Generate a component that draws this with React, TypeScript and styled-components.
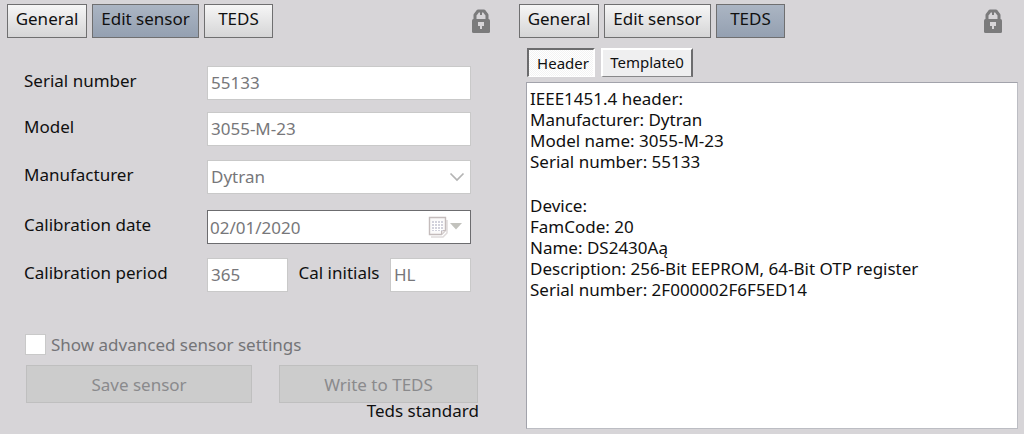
import React, { useState } from "react";
import styled, { createGlobalStyle, css } from "styled-components";

const GlobalStyle = createGlobalStyle`
  *, *::before, *::after { box-sizing: border-box; }
  body {
    margin: 0;
    background: #d7d5d8;
    color: #101010;
    font: 17px/21px "Noto Sans", "DejaVu Sans", sans-serif;
  }
  button, input, select { font: inherit; color: inherit; margin: 0; border-radius: 0; }
`;

const Page = styled.main`
  display: grid;
  grid-template-columns: 1fr 1fr;
  min-height: 100vh;
`;

const Panel = styled.section`
  display: flex;
  flex-direction: column;
  min-width: 0;
  padding: 4px 6px 5px 7px;
`;

const Toolbar = styled.header`
  display: flex;
  align-items: center;
  gap: 5px;
  padding-right: 15px;
`;

const ToolButton = styled.button<{ $active?: boolean; $width: number }>`
  width: ${(p) => p.$width}px;
  height: 34px;
  padding: 0 0 6px;
  white-space: nowrap;
  border: 1px solid #6f6f70;
  background: ${(p) =>
    p.$active
      ? "linear-gradient(#abb5c3, #94a0b1)"
      : "linear-gradient(#f6f6f6, #d5d5d6)"};
`;

const LockSvg = styled.svg`
  display: block;
  margin-left: auto;
`;

const Form = styled.form`
  display: flex;
  flex-direction: column;
  flex: 1;
  padding: 28px 35px 0 17px;
`;

const Row = styled.div<{ $gap?: number }>`
  display: grid;
  grid-template-columns: 183px minmax(0, 1fr);
  align-items: center;
  margin-bottom: ${(p) => p.$gap ?? 0}px;
`;

const Label = styled.label`
  padding-bottom: 6px;
  white-space: nowrap;
`;

const fieldBox = css`
  width: 100%;
  height: 34px;
  background: #fff;
  border: 1px solid #c9c9c9;
  color: #77777a;
  opacity: 1;
`;

const TextInput = styled.input`
  ${fieldBox}
  padding: 0 3px 2px;
`;

const Control = styled.div`
  display: grid;
  align-items: center;
  > * { grid-area: 1 / 1; }
`;

const Select = styled.select`
  ${fieldBox}
  padding: 0 3px 2px;
  appearance: none;
`;

const Chevron = styled.svg`
  justify-self: end;
  margin-right: 6px;
  pointer-events: none;
`;

const DateBox = styled.div`
  ${fieldBox}
  display: flex;
  align-items: center;
  border-color: #6c6c6f;
  padding-right: 8px;
`;

const DateInput = styled.input`
  flex: 1;
  min-width: 0;
  padding: 0 2px;
  border: 0;
  background: none;
`;

const IconButton = styled.button`
  display: block;
  padding: 0;
  border: 0;
  background: none;
  line-height: 0;
`;

const SplitRow = styled.div`
  display: grid;
  grid-template-columns: 81px 1fr 81px;
  align-items: center;
  justify-items: center;
`;

const CheckRow = styled.label`
  display: flex;
  align-items: center;
  gap: 5px;
  margin-top: 42px;
  padding-left: 1px;
  color: #747477;
`;

const Checkbox = styled.input`
  appearance: none;
  width: 21px;
  height: 21px;
  background: #fff;
  border: 1px solid #c9c9c9;
`;

const Actions = styled.div`
  display: grid;
  grid-template-columns: 226fr 199fr;
  gap: 27px;
  margin: 10px -7px 0 2px;
`;

const ActionButton = styled.button`
  height: 38px;
  padding: 0;
  border: 1px solid #bfbfbf;
  background: #cccccc;
  color: #8a8a8c;
`;

const Status = styled.p`
  margin: -3px -8px 0 0;
  text-align: right;
`;

const Tabs = styled.div`
  display: flex;
  gap: 6px;
  margin: 10px 0 5px 8px;
  font-size: 15px;
`;

const Tab = styled.button<{ $active?: boolean }>`
  width: ${(p) => (p.$active ? 68 : 92)}px;
  height: 29px;
  white-space: nowrap;
  border: 2px solid;
  ${(p) =>
    p.$active
      ? css`
          padding: 0 0 0 4px;
          border-color: #6c6c6e #fff #fff #6c6c6e;
          border-bottom-width: 1px;
          background: repeating-conic-gradient(#f3f3f3 0 25%, #fff 0 50%) 0 0 / 2px 2px;
        `
      : css`
          padding: 0 0 2px;
          border-color: #fff #6c6c6e #88888a #fff;
          border-bottom-width: 1px;
          background: #efeff0;
        `}
`;

const Report = styled.div`
  flex: 1;
  margin-left: 7px;
  padding: 5px 3px;
  background: #fff;
  border: 1px solid #bcbdc3;
  border-top-color: #a2a3ab;
  border-left-color: #a2a3ab;
`;

const ReportBlock = styled.p`
  margin: 0 0 23px;
`;

function LockIcon() {
  return (
    <LockSvg width="20" height="26" viewBox="0 0 20 26" role="img" aria-label="Locked">
      <path d="M4 12V7l3-4h6l3 4v5" fill="none" stroke="#7b7b7c" strokeWidth="3" strokeLinejoin="round" />
      <rect x="1" y="11" width="18" height="14" rx="1.5" fill="#7b7b7c" />
      <path d="M7 14h6v4h-2v3H9v-3H7z" fill="#d7d5d8" />
      <path d="M9 4h2v3H9z" fill="#7b7b7c" />
    </LockSvg>
  );
}

function CalendarIcon() {
  return (
    <svg width="34" height="22" viewBox="0 0 34 22" aria-hidden="true">
      <path d="M3 21h12l4-4V4" fill="none" stroke="#dedada" strokeWidth="1.5" />
      <path d="M1.5 1.5h16v13l-4 4h-12z" fill="#fbfafa" stroke="#c4bcbc" strokeWidth="1.4" />
      <path d="M17.500 14.500h-4v4" fill="#e8e4e4" stroke="#c4bcbc" />
      <rect x="4" y="5" width="11" height="10" fill="#d2d2dc" />
      <path d="M4 7.500h11M4 10.500h11M4 13.500h11M6.500 5v10M9.500 5v10M12.500 5v10" stroke="#fff" />
      <path d="M22 7h12l-6 6.500z" fill="#c2c2bd" />
    </svg>
  );
}

const toolItems = [
  { name: "General", width: 80 },
  { name: "Edit sensor", width: 107 },
  { name: "TEDS", width: 69 },
];

function SensorToolbar({ active }: { active: string }) {
  return (
    <Toolbar>
      {toolItems.map((item) => (
        <ToolButton
          key={item.name}
          type="button"
          $width={item.width}
          $active={item.name === active}
          aria-pressed={item.name === active}
        >
          {item.name}
        </ToolButton>
      ))}
      <LockIcon />
    </Toolbar>
  );
}

function EditSensor() {
  return (
    <Form>
      <Row $gap={12}>
        <Label htmlFor="serial">Serial number</Label>
        <TextInput id="serial" defaultValue="55133" disabled />
      </Row>
      <Row $gap={14}>
        <Label htmlFor="model">Model</Label>
        <TextInput id="model" defaultValue="3055-M-23" disabled />
      </Row>
      <Row $gap={16}>
        <Label htmlFor="maker">Manufacturer</Label>
        <Control>
          <Select id="maker" disabled>
            <option>Dytran</option>
          </Select>
          <Chevron width="16" height="10" viewBox="0 0 16 10" aria-hidden="true">
            <path d="M1.500 1.500l6.500 6.500 6.500-6.500" fill="none" stroke="#b4b4b4" strokeWidth="1.7" />
          </Chevron>
        </Control>
      </Row>
      <Row $gap={14}>
        <Label htmlFor="date">Calibration date</Label>
        <DateBox>
          <DateInput id="date" defaultValue="02/01/2020" disabled />
          <IconButton type="button" aria-label="Choose date" disabled>
            <CalendarIcon />
          </IconButton>
        </DateBox>
      </Row>
      <Row>
        <Label htmlFor="period">Calibration period</Label>
        <SplitRow>
          <TextInput id="period" defaultValue="365" disabled />
          <Label htmlFor="initials">Cal initials</Label>
          <TextInput id="initials" defaultValue="HL" disabled />
        </SplitRow>
      </Row>
      <CheckRow>
        <Checkbox type="checkbox" disabled />
        Show advanced sensor settings
      </CheckRow>
      <Actions>
        <ActionButton type="button" disabled>Save sensor</ActionButton>
        <ActionButton type="button" disabled>Write to TEDS</ActionButton>
      </Actions>
      <Status>Teds standard</Status>
    </Form>
  );
}

const report = [
  ["IEEE1451.4 header:", "Manufacturer: Dytran", "Model name: 3055-M-23", "Serial number: 55133"],
  [
    "Device:",
    "FamCode: 20",
    "Name: DS2430Aą",
    "Description: 256-Bit EEPROM, 64-Bit OTP register",
    "Serial number: 2F000002F6F5ED14",
  ],
];

export default function App() {
  const [tab, setTab] = useState("Header");
  return (
    <>
      <GlobalStyle />
      <Page>
        <Panel>
          <SensorToolbar active="Edit sensor" />
          <EditSensor />
        </Panel>
        <Panel>
          <SensorToolbar active="TEDS" />
          <Tabs role="tablist">
            {["Header", "Template0"].map((name) => (
              <Tab
                key={name}
                type="button"
                role="tab"
                $active={name === tab}
                aria-selected={name === tab}
                onClick={() => setTab(name)}
              >
                {name}
              </Tab>
            ))}
          </Tabs>
          <Report role="tabpanel">
            {report.map((lines) => (
              <ReportBlock key={lines[0]}>
                {lines.map((line) => (
                  <React.Fragment key={line}>
                    {line}
                    <br />
                  </React.Fragment>
                ))}
              </ReportBlock>
            ))}
          </Report>
        </Panel>
      </Page>
    </>
  );
}
